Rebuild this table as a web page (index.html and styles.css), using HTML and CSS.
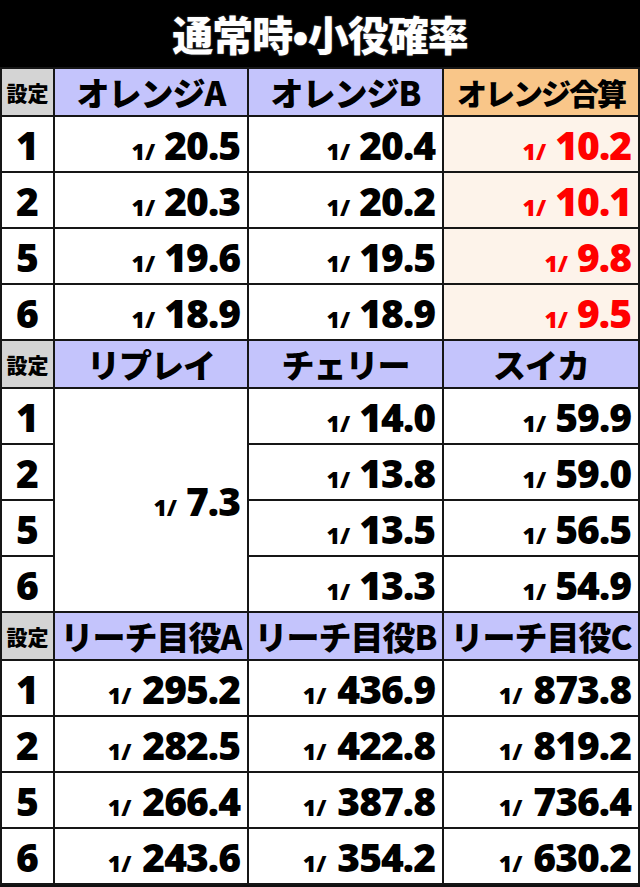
FILE: index.html
```html
<!DOCTYPE html>
<html lang="ja">
<head>
<meta charset="utf-8">
<link rel="stylesheet" href="styles.css">
</head>
<body>
<div class="title">通常時•小役確率</div>
<table class="prob">
  <colgroup><col class="c0"><col class="c1"><col class="c2"><col class="c3"></colgroup>
  <tr class="hd">
    <th class="set">設定</th><th class="blue">オレンジA</th><th class="blue">オレンジB</th><th class="orange">オレンジ合算</th>
  </tr>
  <tr><td class="set">1</td><td class="v"><span class="f">1/</span>20.5</td><td class="v"><span class="f">1/</span>20.4</td><td class="v sum"><span class="f">1/</span>10.2</td></tr>
  <tr><td class="set">2</td><td class="v"><span class="f">1/</span>20.3</td><td class="v"><span class="f">1/</span>20.2</td><td class="v sum"><span class="f">1/</span>10.1</td></tr>
  <tr><td class="set">5</td><td class="v"><span class="f">1/</span>19.6</td><td class="v"><span class="f">1/</span>19.5</td><td class="v sum"><span class="f">1/</span>9.8</td></tr>
  <tr><td class="set">6</td><td class="v"><span class="f">1/</span>18.9</td><td class="v"><span class="f">1/</span>18.9</td><td class="v sum"><span class="f">1/</span>9.5</td></tr>
  <tr class="hd">
    <th class="set">設定</th><th class="blue">リプレイ</th><th class="blue">チェリー</th><th class="blue">スイカ</th>
  </tr>
  <tr><td class="set">1</td><td class="v" rowspan="4"><span class="f">1/</span>7.3</td><td class="v"><span class="f">1/</span>14.0</td><td class="v"><span class="f">1/</span>59.9</td></tr>
  <tr><td class="set">2</td><td class="v"><span class="f">1/</span>13.8</td><td class="v"><span class="f">1/</span>59.0</td></tr>
  <tr><td class="set">5</td><td class="v"><span class="f">1/</span>13.5</td><td class="v"><span class="f">1/</span>56.5</td></tr>
  <tr><td class="set">6</td><td class="v"><span class="f">1/</span>13.3</td><td class="v"><span class="f">1/</span>54.9</td></tr>
  <tr class="hd">
    <th class="set">設定</th><th class="blue">リーチ目役A</th><th class="blue">リーチ目役B</th><th class="blue">リーチ目役C</th>
  </tr>
  <tr><td class="set">1</td><td class="v w"><span class="f">1/</span>295.2</td><td class="v w"><span class="f">1/</span>436.9</td><td class="v w"><span class="f">1/</span>873.8</td></tr>
  <tr><td class="set">2</td><td class="v w"><span class="f">1/</span>282.5</td><td class="v w"><span class="f">1/</span>422.8</td><td class="v w"><span class="f">1/</span>819.2</td></tr>
  <tr><td class="set">5</td><td class="v w"><span class="f">1/</span>266.4</td><td class="v w"><span class="f">1/</span>387.8</td><td class="v w"><span class="f">1/</span>736.4</td></tr>
  <tr><td class="set">6</td><td class="v w"><span class="f">1/</span>243.6</td><td class="v w"><span class="f">1/</span>354.2</td><td class="v w"><span class="f">1/</span>630.2</td></tr>
</table>
</body>
</html>
```
FILE: styles.css
```css
html, body {
  margin: 0;
  padding: 0;
  background: #111;
}
body {
  width: 640px;
  height: 887px;
  overflow: hidden;
  font-family: "Open Sans", "Noto Sans CJK JP", sans-serif;
}
.title {
  height: 67px;
  background: #000;
  color: #fff;
  font-family: "Noto Sans CJK JP", sans-serif;
  font-weight: 900;
  font-size: 41px;
  line-height: 66px;
  text-align: center;
  letter-spacing: -1px;
  text-shadow: 0 0 2px #555;
}
.prob {
  border-collapse: separate;
  border-spacing: 2px;
  background: #161616;
  width: 640px;
  table-layout: fixed;
}
.prob col.c0 { width: 51px; }
.prob col.c1 { width: 192px; }
.prob col.c2 { width: 193px; }
.prob col.c3 { width: 194px; }
.prob td, .prob th {
  padding: 0;
}
.prob tr.hd th {
  height: 46px;
  font-family: "Noto Sans CJK JP", sans-serif;
  font-weight: 900;
  font-size: 33px;
  line-height: 1;
  color: #000;
  text-align: center;
  white-space: nowrap;
  overflow: hidden;
  letter-spacing: -1px;
}
.prob tr.hd th.set {
  background: #d4d4d4;
  font-size: 21px;
  letter-spacing: 0;
}
.prob th.blue {
  background: #c4c4fc;
}
.prob tr.hd th.orange {
  background: #f9c689;
  font-size: 30px;
  letter-spacing: -2px;
}
.prob td {
  height: 54px;
  background: #fff;
  color: #000;
}
.prob td.set {
  text-align: center;
  font-weight: 800;
  font-size: 39px;
  line-height: 1;
}
.prob td.v {
  text-align: right;
  padding-right: 7px;
  font-weight: 800;
  font-size: 39px;
  line-height: 1;
  white-space: nowrap;
  letter-spacing: -1px;
}
.prob td.v .f {
  font-size: 23px;
  margin-right: 9px;
  letter-spacing: 0;
}
.prob td.w .f {
  margin-right: 11px;
}
.prob td.sum {
  background: #fdf3ea;
  color: #ff0000;
}
```
